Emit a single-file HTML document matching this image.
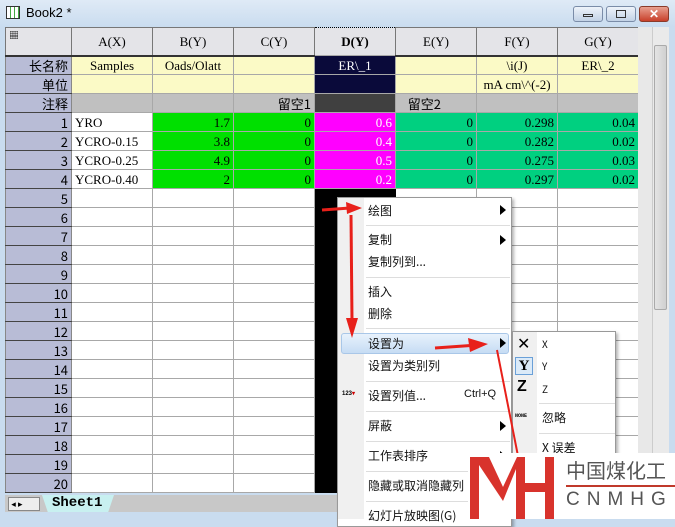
<!DOCTYPE html><html><head><style>
*{margin:0;padding:0;box-sizing:border-box}
body{width:675px;height:519px;overflow:hidden;background:#c9dcef;font-family:"Liberation Serif","Noto Serif CJK SC",serif;font-size:13px;position:relative}
.a{position:absolute}
.t{font-family:"Liberation Sans","Noto Sans CJK SC",sans-serif;font-size:12px}
table{border-collapse:collapse;position:absolute;left:5px;top:27px;table-layout:fixed}
td{border:1px solid #a8a8a8;height:19px;padding:0 3px;white-space:nowrap;overflow:hidden;font-size:13px;line-height:17px}
td.h{background:#b8bcd6;text-align:right;border-color:#555 #888 #444 #888;font-family:"Noto Sans CJK SC","Liberation Serif",serif}
tr.hd td{height:28px;background:#e4e4e8;text-align:center;border-color:#777;border-bottom:2px solid #333}
.y{background:#fbfac6;text-align:center}
.g{background:#c0c0c0}
.gr{background:#00e000;text-align:right}
.tq{background:#00d080;text-align:right}
.m{background:#ff00ff;color:#fff;text-align:right}
.w{background:#fff}
.k{background:#000;border-color:#000}
.mi{position:absolute;left:368px;font-family:"Noto Sans CJK SC",sans-serif;font-size:12px;color:#111}
.sep{position:absolute;left:366px;width:144px;height:1px;background:#ddd}
.ar{position:absolute;left:500px;width:0;height:0;border-top:5px solid transparent;border-bottom:5px solid transparent;border-left:6px solid #000}
</style></head><body>
<div class="a" style="left:0;top:0;width:675px;height:27px;background:linear-gradient(#dfeaf6,#c9dcef)"></div>
<div class="a" style="left:6px;top:6px;width:14px;height:13px;border:1px solid #333;background:repeating-linear-gradient(90deg,#fff 0 3px,#4a4 3px 4px)"></div>
<div class="a t" style="left:26px;top:5px;font-size:13px">Book2 *</div>
<div class="a" style="left:573px;top:6px;width:30px;height:16px;border:1px solid #7a8ca8;border-radius:3px;background:linear-gradient(#eef3fa,#c2d2e6)"></div>
<div class="a" style="left:583px;top:14px;width:10px;height:3px;border:1px solid #333"></div>
<div class="a" style="left:606px;top:6px;width:30px;height:16px;border:1px solid #7a8ca8;border-radius:3px;background:linear-gradient(#eef3fa,#c2d2e6)"></div>
<div class="a" style="left:616px;top:10px;width:10px;height:8px;border:1px solid #333"></div>
<div class="a" style="left:639px;top:6px;width:30px;height:16px;border:1px solid #8a3a2a;border-radius:3px;background:linear-gradient(#e8a090,#c8402a);color:#fff;font:bold 12px 'Liberation Sans';text-align:center;line-height:14px">✕</div>
<table>
<colgroup><col style="width:66px"><col style="width:81px"><col style="width:81px"><col style="width:81px"><col style="width:81px"><col style="width:81px"><col style="width:81px"><col style="width:81px"></colgroup>
<tr class="hd"><td style="text-align:left;font-size:10px;vertical-align:top">▦</td><td>A(X)</td><td>B(Y)</td><td>C(Y)</td><td style="font-weight:bold;border:1px dotted #000">D(Y)</td><td>E(Y)</td><td>F(Y)</td><td>G(Y)</td></tr>
<tr><td class="h">长名称</td><td class="y">Samples</td><td class="y">Oads/Olatt</td><td class="y"></td><td class="y" style="background:#0a0a3a;color:#fff">ER\_1</td><td class="y"></td><td class="y">\i(J)</td><td class="y">ER\_2</td></tr>
<tr><td class="h">单位</td><td class="y"></td><td class="y"></td><td class="y"></td><td style="background:#0a0a3a"></td><td class="y"></td><td class="y" style="padding:0">mA cm\^(-2)</td><td class="y"></td></tr>
<tr><td class="h">注释</td><td class="g"></td><td class="g"></td><td class="g" style="font-family:'Noto Sans CJK SC';text-align:right">留空1</td><td style="background:#404040"></td><td class="g" style="font-family:'Noto Sans CJK SC'">&nbsp;&nbsp;&nbsp;留空2</td><td class="g"></td><td class="g"></td></tr>
<tr><td class="h">1</td><td class="w">YRO</td><td class="gr">1.7</td><td class="gr">0</td><td class="m">0.6</td><td class="tq">0</td><td class="tq">0.298</td><td class="tq">0.04</td></tr>
<tr><td class="h">2</td><td class="w">YCRO-0.15</td><td class="gr">3.8</td><td class="gr">0</td><td class="m">0.4</td><td class="tq">0</td><td class="tq">0.282</td><td class="tq">0.02</td></tr>
<tr><td class="h">3</td><td class="w">YCRO-0.25</td><td class="gr">4.9</td><td class="gr">0</td><td class="m">0.5</td><td class="tq">0</td><td class="tq">0.275</td><td class="tq">0.03</td></tr>
<tr><td class="h">4</td><td class="w">YCRO-0.40</td><td class="gr">2</td><td class="gr">0</td><td class="m">0.2</td><td class="tq">0</td><td class="tq">0.297</td><td class="tq">0.02</td></tr>
<tr><td class="h">5</td><td class="w"></td><td class="w"></td><td class="w"></td><td class="k"></td><td class="w"></td><td class="w"></td><td class="w"></td></tr>
<tr><td class="h">6</td><td class="w"></td><td class="w"></td><td class="w"></td><td class="k"></td><td class="w"></td><td class="w"></td><td class="w"></td></tr>
<tr><td class="h">7</td><td class="w"></td><td class="w"></td><td class="w"></td><td class="k"></td><td class="w"></td><td class="w"></td><td class="w"></td></tr>
<tr><td class="h">8</td><td class="w"></td><td class="w"></td><td class="w"></td><td class="k"></td><td class="w"></td><td class="w"></td><td class="w"></td></tr>
<tr><td class="h">9</td><td class="w"></td><td class="w"></td><td class="w"></td><td class="k"></td><td class="w"></td><td class="w"></td><td class="w"></td></tr>
<tr><td class="h">10</td><td class="w"></td><td class="w"></td><td class="w"></td><td class="k"></td><td class="w"></td><td class="w"></td><td class="w"></td></tr>
<tr><td class="h">11</td><td class="w"></td><td class="w"></td><td class="w"></td><td class="k"></td><td class="w"></td><td class="w"></td><td class="w"></td></tr>
<tr><td class="h">12</td><td class="w"></td><td class="w"></td><td class="w"></td><td class="k"></td><td class="w"></td><td class="w"></td><td class="w"></td></tr>
<tr><td class="h">13</td><td class="w"></td><td class="w"></td><td class="w"></td><td class="k"></td><td class="w"></td><td class="w"></td><td class="w"></td></tr>
<tr><td class="h">14</td><td class="w"></td><td class="w"></td><td class="w"></td><td class="k"></td><td class="w"></td><td class="w"></td><td class="w"></td></tr>
<tr><td class="h">15</td><td class="w"></td><td class="w"></td><td class="w"></td><td class="k"></td><td class="w"></td><td class="w"></td><td class="w"></td></tr>
<tr><td class="h">16</td><td class="w"></td><td class="w"></td><td class="w"></td><td class="k"></td><td class="w"></td><td class="w"></td><td class="w"></td></tr>
<tr><td class="h">17</td><td class="w"></td><td class="w"></td><td class="w"></td><td class="k"></td><td class="w"></td><td class="w"></td><td class="w"></td></tr>
<tr><td class="h">18</td><td class="w"></td><td class="w"></td><td class="w"></td><td class="k"></td><td class="w"></td><td class="w"></td><td class="w"></td></tr>
<tr><td class="h">19</td><td class="w"></td><td class="w"></td><td class="w"></td><td class="k"></td><td class="w"></td><td class="w"></td><td class="w"></td></tr>
<tr><td class="h">20</td><td class="w"></td><td class="w"></td><td class="w"></td><td class="k"></td><td class="w"></td><td class="w"></td><td class="w"></td></tr>
</table>
<div class="a" style="left:638px;top:27px;width:14px;height:468px;background:#e8e8e8"></div>
<div class="a" style="left:652px;top:27px;width:17px;height:468px;background:#eaeaea;border-left:1px solid #ccc"></div>
<div class="a" style="left:654px;top:45px;width:13px;height:265px;background:linear-gradient(90deg,#e4e4e4,#d0d0d0);border:1px solid #aaa;border-radius:2px"></div>
<div class="a" style="left:5px;top:495px;width:664px;height:17px;background:#c8c8c8"></div>
<div class="a" style="left:8px;top:497px;width:32px;height:14px;background:#eee;border:1px solid #888;font-size:9px;line-height:12px">&nbsp;◂ ▸</div>
<div class="a" style="left:42px;top:495px;width:72px;height:17px;background:#c8f0f0;font:bold 14px 'Liberation Mono',monospace;padding-left:10px;line-height:17px;clip-path:polygon(0 0,100% 0,92% 100%,8% 100%)">Sheet1</div>
<div class="a" style="left:337px;top:197px;width:175px;height:330px;background:#fff;border:1px solid #999;box-shadow:2px 2px 3px rgba(0,0,0,.3)"></div>
<div class="a" style="left:338px;top:198px;width:26px;height:321px;background:#f0f0f0"></div>
<div class="a" style="left:341px;top:333px;width:168px;height:21px;border:1px solid #a9c7e8;border-radius:3px;background:linear-gradient(#e8f2fc,#c6dcf4)"></div>
<div class="mi" style="top:202px">绘图</div><div class="ar" style="top:205px"></div>
<div class="sep" style="top:225px"></div>
<div class="mi" style="top:231px">复制</div><div class="ar" style="top:235px"></div>
<div class="mi" style="top:253px">复制列到...</div>
<div class="sep" style="top:277px"></div>
<div class="mi" style="top:283px">插入</div>
<div class="mi" style="top:305px">删除</div>
<div class="sep" style="top:328px"></div>
<div class="mi" style="top:335px">设置为</div><div class="ar" style="top:338px"></div>
<div class="mi" style="top:357px">设置为类别列</div>
<div class="sep" style="top:381px"></div>
<div class="mi" style="top:387px">设置列值...</div><div class="mi" style="left:464px;top:388px;font-family:'Liberation Sans';font-size:11px">Ctrl+Q</div>
<div class="a" style="left:342px;top:390px;font:bold 6px 'Liberation Sans'">123<span style="color:#c00">▾</span></div>
<div class="sep" style="top:411px"></div>
<div class="mi" style="top:417px">屏蔽</div><div class="ar" style="top:421px"></div>
<div class="sep" style="top:441px"></div>
<div class="mi" style="top:447px">工作表排序</div><div class="ar" style="top:451px"></div>
<div class="sep" style="top:471px"></div>
<div class="mi" style="top:477px">隐藏或取消隐藏列</div>
<div class="sep" style="top:501px"></div>
<div class="mi" style="top:507px">幻灯片放映图(G)</div>
<div class="a" style="left:512px;top:331px;width:104px;height:130px;background:#fff;border:1px solid #999;box-shadow:2px 2px 3px rgba(0,0,0,.3)"></div>
<div class="a" style="left:513px;top:332px;width:24px;height:128px;background:#f0f0f0"></div>
<div class="a t" style="left:517px;top:334px;font-size:16px">✕</div><div class="mi" style="left:542px;top:336px;font-size:10px">X</div>
<div class="a" style="left:515px;top:357px;width:18px;height:18px;border:1px solid #6aa0d8;background:#dbeaf8;font:bold 15px 'Liberation Serif';text-align:center;line-height:17px">Y</div><div class="mi" style="left:542px;top:358px;font-size:10px">Y</div>
<div class="a t" style="left:517px;top:378px;font-size:16px;font-weight:bold">Z</div><div class="mi" style="left:542px;top:381px;font-size:10px">Z</div>
<div class="a" style="left:539px;top:403px;width:76px;height:1px;background:#ddd"></div>
<div class="a" style="left:515px;top:413px;font:bold 5px 'Liberation Mono'">NONE</div><div class="mi" style="left:542px;top:409px">忽略</div>
<div class="a" style="left:539px;top:433px;width:76px;height:1px;background:#ddd"></div>
<div class="mi" style="left:542px;top:439px">X 误差</div>
<svg class="a" style="left:0;top:0" width="675" height="519">
<g stroke="#e8201a" stroke-width="3" fill="#e8201a">
<line x1="322" y1="210" x2="350" y2="208"/><polygon points="362,208 346,202 347,214" stroke="none"/>
<line x1="351" y1="215" x2="352" y2="320"/><polygon points="352,338 346,318 358,318" stroke="none"/>
<line x1="435" y1="348" x2="478" y2="345"/><polygon points="488,344 468,338 470,352" stroke="none"/>
<line x1="497" y1="350" x2="518" y2="456" stroke-width="2"/>
</g></svg>
<div class="a" style="left:468px;top:453px;width:207px;height:66px;background:#fff"></div>
<svg class="a" style="left:468px;top:453px" width="90" height="66"><g fill="#d8332c">
<rect x="2" y="4" width="9" height="62"/><path d="M11 4h10l14 30v14L11 12z"/><path d="M35 34l14-30h8v62h-9V16L35 48z"/><rect x="57" y="30" width="20" height="9"/><rect x="77" y="4" width="9" height="62"/></g></svg>
<div class="a" style="left:566px;top:457px;font:20px 'Noto Sans CJK SC',sans-serif;color:#555;line-height:26px;white-space:nowrap">中国煤化工</div>
<div class="a" style="left:566px;top:485px;width:109px;height:2px;background:#c0392b"></div>
<div class="a" style="left:566px;top:489px;font:19px 'Liberation Sans',sans-serif;color:#555;letter-spacing:7px;white-space:nowrap">CNMHG</div>
</body></html>
